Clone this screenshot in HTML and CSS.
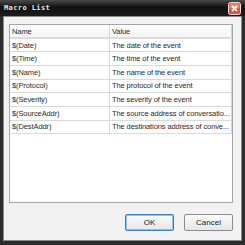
FILE: index.html
```html
<html>
	<head>
		<meta charset="UTF-8" />
		<title>Macro List</title>
		<link rel="stylesheet" href="styles.css">
	</head>
	<body>
		<div class="window">
			<div class="titlebar">
				<span class="title">Macro List</span>
				<span class="close">
					<svg width="13" height="13" viewBox="0 0 13 13">
						<rect x="0.5" y="0.5" width="12" height="12" rx="2" fill="#d8553a" stroke="#f3e0d8" />
						<rect x="1.5" y="1.5" width="10" height="5" rx="1" fill="#e9866b" />
						<path d="M4 4 L9 9 M9 4 L4 9" stroke="#fff" stroke-width="1.8" />
					</svg>
				</span>
			</div>
			<div class="content">
				<div class="list">
					<table>
						<thead>
							<tr><th class="col-name">Name</th><th>Value</th></tr>
						</thead>
						<tbody>
							<tr><td>$(Date)</td><td>The date of the event</td></tr>
							<tr><td>$(Time)</td><td>The time of the event</td></tr>
							<tr><td>$(Name)</td><td>The name of the event</td></tr>
							<tr><td>$(Protocol)</td><td>The protocol of the event</td></tr>
							<tr><td>$(Severity)</td><td>The severity of the event</td></tr>
							<tr><td>$(SourceAddr)</td><td>The source address of conversatio...</td></tr>
							<tr><td>$(DestAddr)</td><td>The destinations address of conve...</td></tr>
						</tbody>
					</table>
				</div>
				<div class="buttons">
					<button type="button" class="btn default">OK</button>
					<button type="button" class="btn">Cancel</button>
				</div>
			</div>
		</div>
	</body>
</html>
```

FILE: styles.css
```css
body {
	margin: 0;
	font-family: "DejaVu Sans", sans-serif;
}
.window {
	width: 245px;
	height: 245px;
	box-sizing: border-box;
	background-color: #2c2c2c;
	padding: 0 3px 4px 3px;
	display: flex;
	flex-direction: column;
}
.titlebar {
	height: 16px;
	margin: 0 -3px;
	padding: 0 4px 0 4px;
	display: flex;
	align-items: center;
	justify-content: space-between;
	background: linear-gradient(#4a4a4a, #111 45%, #1c1c1c);
}
.title {
	font: bold 7px "DejaVu Sans Mono", monospace;
	color: #e8e8e8;
	letter-spacing: 0.4px;
}
.close {
	display: flex;
}
.content {
	flex: 1;
	background-color: #f2f2f2;
	border: 1px solid #8a8a8a;
	padding: 7px 8px 9px 5px;
	display: flex;
	flex-direction: column;
	gap: 11px;
}
.list {
	flex: 1;
	background-color: #fff;
	border: 1px solid #a5a5a5;
}
table {
	width: 100%;
	table-layout: fixed;
	border-collapse: collapse;
	font: 7.5px "Liberation Sans", sans-serif;
	letter-spacing: -0.1px;
	color: #2a2a2a;
}
th {
	height: 13px;
	text-align: left;
	font-weight: normal;
	padding: 0 2px;
	background: linear-gradient(#fff, #f4f4f4);
	border: 1px solid #d6d6d6;
	border-top: none;
	border-bottom: 2px solid #dcdcdc;
}
th:first-child, td:first-child {
	border-left: none;
}
.col-name {
	width: 95px;
}
td {
	height: 13.7px;
	padding: 0 2px;
	border: 1px solid #d9d9d9;
	white-space: nowrap;
	overflow: hidden;
}
.buttons {
	display: flex;
	justify-content: flex-end;
	gap: 10px;
}
.btn {
	width: 49px;
	height: 17px;
	font: 8px "Liberation Sans", sans-serif;
	color: #222;
	background: linear-gradient(#fbfbfb, #e6e6e6);
	border: 1px solid #8c8c8c;
	border-radius: 2px;
	padding: 0;
}
.default {
	border: 1px solid #3b7fb8;
	box-shadow: inset 0 0 0 1px #8cc3ea;
}
```
